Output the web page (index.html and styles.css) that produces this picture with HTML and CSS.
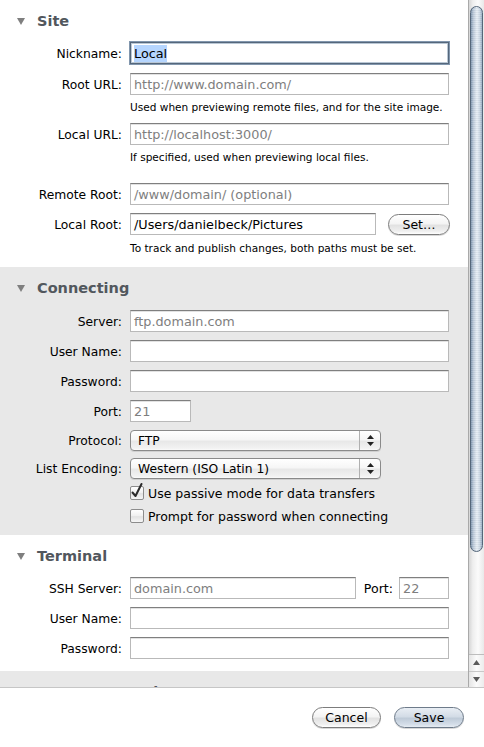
FILE: index.html
```html
<!DOCTYPE html>
<html>
<head>
<meta charset="utf-8">
<link rel="stylesheet" href="styles.css">
</head>
<body>
<div class="window">
  <div class="scrollview">
    <div class="content">
      <section class="section site">
        <div class="sec-head">
          <svg class="disclosure" width="8" height="7" viewBox="0 0 8 7"><polygon points="0,0 8,0 4,7" fill="#7f7f7f"/></svg>
          <span class="sec-title">Site</span>
        </div>
        <div class="row first">
          <span class="label">Nickname:</span>
          <div class="field focused"><span class="sel">Local</span></div>
        </div>
        <div class="row r9">
          <span class="label">Root URL:</span>
          <div class="field"><span class="placeholder">http://www.domain.com/</span></div>
        </div>
        <div class="hint">Used when previewing remote files, and for the site image.</div>
        <div class="row r9">
          <span class="label">Local URL:</span>
          <div class="field"><span class="placeholder">http://localhost:3000/</span></div>
        </div>
        <div class="hint">If specified, used when previewing local files.</div>
        <div class="row r19">
          <span class="label">Remote Root:</span>
          <div class="field"><span class="placeholder">/www/domain/ (optional)</span></div>
        </div>
        <div class="row">
          <span class="label">Local Root:</span>
          <div class="inline">
            <div class="field grow">/Users/danielbeck/Pictures</div>
            <button class="aqua set">Set…</button>
          </div>
        </div>
        <div class="hint h6">To track and publish changes, both paths must be set.</div>
      </section>

      <section class="section alt connecting">
        <div class="sec-head">
          <svg class="disclosure" width="8" height="7" viewBox="0 0 8 7"><polygon points="0,0 8,0 4,7" fill="#7f7f7f"/></svg>
          <span class="sec-title">Connecting</span>
        </div>
        <div class="row first1">
          <span class="label">Server:</span>
          <div class="field"><span class="placeholder">ftp.domain.com</span></div>
        </div>
        <div class="row">
          <span class="label">User Name:</span>
          <div class="field"></div>
        </div>
        <div class="row">
          <span class="label">Password:</span>
          <div class="field"></div>
        </div>
        <div class="row">
          <span class="label">Port:</span>
          <div class="inline"><div class="field port"><span class="placeholder">21</span></div></div>
        </div>
        <div class="row pop-row">
          <span class="label">Protocol:</span>
          <div class="inline">
            <div class="popup"><span class="pop-text">FTP</span><span class="pop-arrows"><svg width="7" height="11" viewBox="0 0 7 11"><polygon points="3.5,0 7,4 0,4" fill="#222"/><polygon points="0,7 7,7 3.5,11" fill="#222"/></svg></span></div>
          </div>
        </div>
        <div class="row pop-row r7">
          <span class="label">List Encoding:</span>
          <div class="inline">
            <div class="popup"><span class="pop-text">Western (ISO Latin 1)</span><span class="pop-arrows"><svg width="7" height="11" viewBox="0 0 7 11"><polygon points="3.5,0 7,4 0,4" fill="#222"/><polygon points="0,7 7,7 3.5,11" fill="#222"/></svg></span></div>
          </div>
        </div>
        <div class="check-row c1">
          <span class="checkbox"><svg width="16" height="18" viewBox="0 0 16 18"><path d="M3.5 10.5 L6.5 14 L12.5 2" fill="none" stroke="#2b2b2b" stroke-width="2" stroke-linecap="round" stroke-linejoin="round"/></svg></span>
          <span>Use passive mode for data transfers</span>
        </div>
        <div class="check-row c2">
          <span class="checkbox"></span>
          <span>Prompt for password when connecting</span>
        </div>
      </section>

      <section class="section terminal">
        <div class="sec-head">
          <svg class="disclosure" width="8" height="7" viewBox="0 0 8 7"><polygon points="0,0 8,0 4,7" fill="#7f7f7f"/></svg>
          <span class="sec-title">Terminal</span>
        </div>
        <div class="row first">
          <span class="label">SSH Server:</span>
          <div class="inline">
            <div class="field grow"><span class="placeholder">domain.com</span></div>
            <span class="port-label">Port:</span>
            <div class="field sshport"><span class="placeholder">22</span></div>
          </div>
        </div>
        <div class="row">
          <span class="label">User Name:</span>
          <div class="field"></div>
        </div>
        <div class="row">
          <span class="label">Password:</span>
          <div class="field"></div>
        </div>
      </section>

      <section class="section alt source">
        <div class="sec-head">
          <svg class="disclosure" width="8" height="7" viewBox="0 0 8 7"><polygon points="0,0 8,0 4,7" fill="#7f7f7f"/></svg>
          <span class="sec-title">Source Control</span>
        </div>
      </section>
    </div>
    <div class="scrollbar">
      <div class="track"><div class="thumb"></div></div>
      <div class="arrows">
        <div class="arr"><svg width="7" height="5" viewBox="0 0 7 5"><polygon points="3.5,0 7,5 0,5" fill="#5a5a5a"/></svg></div>
        <div class="arr down"><svg width="7" height="5" viewBox="0 0 7 5"><polygon points="0,0 7,0 3.5,5" fill="#5a5a5a"/></svg></div>
      </div>
    </div>
  </div>
  <div class="footer">
    <button class="aqua cancel">Cancel</button>
    <button class="aqua save">Save</button>
  </div>
</div>
</body>
</html>
```

FILE: styles.css
```css
* { box-sizing: border-box; }
html, body { margin: 0; padding: 0; }
body {
  width: 484px;
  height: 747px;
  overflow: hidden;
  background: #ffffff;
  font-family: "DejaVu Sans", "Liberation Sans", sans-serif;
  font-size: 12.3px;
  color: #000;
}
.window { display: flex; flex-direction: column; height: 747px; }
.scrollview {
  display: flex;
  height: 688px;
  border-bottom: 1px solid #c6c6c6;
}
.content { flex: 1; overflow: hidden; }

.section { background: #ffffff; }
.section.alt { background: #e8e8e8; }
.site { padding-bottom: 12px; }
.connecting { padding-bottom: 11px; }
.terminal { padding-bottom: 12px; }

.sec-head { height: 42px; display: flex; align-items: center; }
.disclosure { margin-left: 17px; margin-right: 12px; margin-top: 1px; }
.sec-title { font-weight: bold; font-size: 14.5px; color: #52575d; }

.row {
  display: grid;
  grid-template-columns: 122px 1fr;
  column-gap: 8px;
  align-items: center;
  height: 22px;
  margin-top: 8px;
  padding-right: 19px;
}
.row.first { margin-top: 0; }
.row.first1 { margin-top: 1px; }
.row.r9 { margin-top: 9px; }
.row.r19 { margin-top: 19px; }
.row.r7 { margin-top: 7px; }
.row.pop-row { height: 21px; }
.label { text-align: right; white-space: nowrap; padding-top: 1px; }

.inline { display: flex; align-items: center; }
.field {
  height: 22px;
  background: #fff;
  border: 1px solid #b9b9b9;
  border-top-color: #7f7f7f;
  box-shadow: inset 0 1px 0 #e2e2e2;
  padding: 1px 3px 0 3px;
  display: flex;
  align-items: center;
  white-space: nowrap;
  overflow: hidden;
  font-size: 12.8px;
}
.field.grow { flex: 1; }
.field.focused {
  border-color: #55677b;
  box-shadow: 0 0 0 1px #8196ad, inset 0 0 0 1px #b9c7d5;
}
.sel { background: #b5d5fe; padding: 1px 0; }
.placeholder { color: #7e7e7e; }
.field.port { width: 61px; }
.port-label { margin-left: 8px; margin-right: 6px; font-size: 12.6px; }
.field.sshport { width: 50px; }

.hint {
  margin-left: 130px;
  margin-top: 5px;
  font-size: 10.55px;
  line-height: 14px;
}
.hint.h6 { margin-top: 6px; }

.aqua {
  font-family: inherit;
  font-size: 12.5px;
  color: #000;
  height: 21px;
  border-radius: 10.5px;
  border: 1px solid #7c7c7c;
  background: linear-gradient(to bottom, #ffffff 0%, #f4f4f4 45%, #e2e2e2 55%, #efefef 85%, #ffffff 100%);
  padding: 0;
  box-shadow: 0 1px 0 #d8d8d8;
}
.aqua.set { width: 62px; margin-left: 12px; margin-right: -1px; }

.popup {
  width: 251px;
  height: 21px;
  border: 1px solid #8a8a8a;
  border-radius: 4px;
  background: linear-gradient(to bottom, #ffffff 0%, #f6f6f6 45%, #e8e8e8 55%, #f2f2f2 90%, #fafafa 100%);
  display: flex;
  align-items: center;
  box-shadow: 0 1px 0 #d0d0d0;
}
.pop-text { flex: 1; padding-left: 7px; white-space: nowrap; }
.pop-arrows {
  width: 21px;
  height: 100%;
  border-left: 1px solid #b0b0b0;
  display: flex;
  align-items: center;
  justify-content: center;
}

.check-row {
  display: flex;
  align-items: center;
  height: 16px;
  margin-left: 130px;
  gap: 4px;
  font-size: 12.5px;
}
.check-row.c1 { margin-top: 6px; }
.check-row.c2 { margin-top: 7px; }
.checkbox {
  position: relative;
  width: 14px;
  height: 14px;
  border: 1px solid #8c8c8c;
  border-radius: 2px;
  background: linear-gradient(to bottom, #ffffff, #f0f0f0 50%, #e2e2e2 55%, #f6f6f6);
}
.checkbox svg { position: absolute; left: -2px; top: -5px; }

.scrollbar {
  width: 16px;
  display: flex;
  flex-direction: column;
  border-left: 1px solid #a9a9a9;
  background: linear-gradient(to right, #d6d6d6, #eeeeee 25%, #fbfbfb 60%, #e9e9e9);
}
.track { flex: 1; padding: 6px 1px 2px 1px; }
.thumb {
  height: 546px;
  border-radius: 7px;
  border: 1px solid #55677a;
  background:
    repeating-linear-gradient(to bottom, rgba(255,255,255,0.12) 0 1px, rgba(0,0,0,0.03) 1px 2px),
    linear-gradient(to right, #7e95ad 0%, #b7c6d6 20%, #dce5ee 45%, #e7eef5 55%, #c9d6e3 80%, #98adc3 100%);
}
.arrows { height: 33px; border-top: 1px solid #bdbdbd; display: flex; flex-direction: column; }
.arr {
  flex: 1;
  display: flex;
  align-items: center;
  justify-content: center;
  background: linear-gradient(to right, #e4e4e4, #fbfbfb 50%, #ececec);
}
.arr.down { border-top: 1px solid #c8c8c8; }

.footer {
  flex: 1;
  display: flex;
  justify-content: flex-end;
  align-items: flex-start;
  padding-top: 19px;
  padding-right: 20px;
  gap: 13px;
  background: #ffffff;
}
.aqua.cancel { width: 69px; }
.aqua.save {
  width: 70px;
  border-color: #6e7b8a;
  background: linear-gradient(to bottom, #e9eef4 0%, #d3dce6 45%, #bfcbd8 55%, #d3dde8 85%, #e6ecf2 100%);
}
```
